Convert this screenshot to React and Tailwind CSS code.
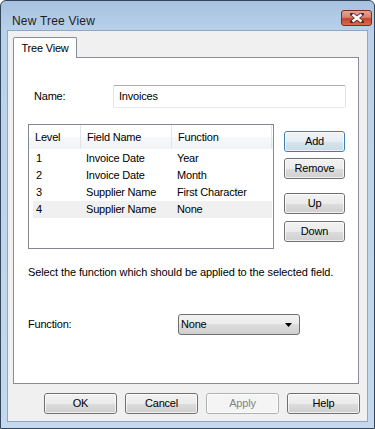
import React from 'react';

const ROWS = [
  { level: '1', field: 'Invoice Date', fn: 'Year' },
  { level: '2', field: 'Invoice Date', fn: 'Month' },
  { level: '3', field: 'Supplier Name', fn: 'First Character' },
  { level: '4', field: 'Supplier Name', fn: 'None', selected: true },
];

const font = { fontFamily: '"Liberation Sans", Arial, sans-serif' };

const WinButton = ({ children, className = '', isDefault, disabled }) => {
  const border = isDefault
    ? 'border-[#3c7fb1]'
    : disabled
    ? 'border-[#adb2b5]'
    : 'border-[#707070]';
  const bg = isDefault
    ? 'bg-[linear-gradient(#eef4f9_0%,#e6eef5_50%,#d8e4ee_50%,#cbdae6_100%)]'
    : disabled
    ? 'bg-[#f4f4f4]'
    : 'bg-[linear-gradient(#f2f2f2_0%,#ebebeb_50%,#dddddd_50%,#cfcfcf_100%)]';
  return (
    <div
      className={`flex items-center justify-center h-[21px] rounded-[3px] border ${border} ${bg} ${
        disabled ? 'text-[#838383]' : 'text-black'
      } text-[11px] tracking-[-0.2px] ${className}`}
    >
      <div className="flex items-center justify-center w-full h-full rounded-[2px] border border-white/70">
        {children}
      </div>
    </div>
  );
};

const App = () => {
  return (
    <div className="w-[375px] h-[429px] bg-white" style={font}>
      <div className="flex flex-col h-full rounded-t-[6px] border border-[#34475a] bg-[linear-gradient(#a7c2df_0px,#b9d1ea_30px,#c4d9ef_100%)]">
        {/* title bar */}
        <div className="flex items-start h-[29px] shrink-0 pl-[11px] pr-[2px]">
          <div className="mt-[13px] text-[12px] text-[#1e1e1e] tracking-[0.2px] leading-[14px]">
            New Tree View
          </div>
          <div className="ml-auto mt-[9px] w-[31px] h-[16px] rounded-[3px] border border-[#7a2d22] bg-[linear-gradient(#e8a493_0%,#d7826d_45%,#c7452f_55%,#d96a4f_100%)] flex items-center justify-center">
            <svg width="14" height="10" viewBox="0 0 14 10">
              <path d="M2 1 L12 9 M12 1 L2 9" stroke="#5a2a22" strokeWidth="4" strokeLinecap="square" />
              <path d="M2.5 1.5 L11.5 8.5 M11.5 1.5 L2.5 8.5" stroke="#ffffff" strokeWidth="2.4" />
            </svg>
          </div>
        </div>

        {/* client area */}
        <div className="flex-1 mx-[6px] mb-[6px] bg-[#f0f0f0] border border-[#8fa7c1] flex flex-col px-[5px] pt-[6px]">
          {/* tab header */}
          <div className="flex">
            <div className="relative z-10 w-[64px] h-[21px] -mb-px bg-white border border-b-0 border-[#898c95] rounded-t-[2px] flex items-center justify-center text-[11px] tracking-[-0.2px] text-black">
              Tree View
            </div>
          </div>

          {/* tab panel */}
          <div className="h-[327px] w-[346px] bg-white border border-[#898c95] flex flex-col text-[11px] tracking-[-0.2px] text-black">
            <div className="flex items-center mt-[27px] pl-[20px]">
              <div className="w-[79px]">Name:</div>
              <div className="w-[233px] h-[23px] border border-[#abadb3] border-x-[#e2e3ea] border-b-[#e3e9ef] rounded-[2px] flex items-center pl-[5px]">
                Invoices
              </div>
            </div>

            <div className="flex mt-[16px] pl-[14px]">
              <div className="w-[246px] h-[125px] border border-[#828790] bg-white">
                <div className="flex h-[24px] bg-[linear-gradient(#ffffff_0%,#ffffff_50%,#f7f8fa_50%,#f1f2f4_100%)]">
                  <div className="w-[52px] pl-[6px] flex items-center border-r border-[#e5e5e5]">Level</div>
                  <div className="w-[91px] pl-[6px] flex items-center border-r border-[#e5e5e5]">Field Name</div>
                  <div className="w-[100px] pl-[6px] flex items-center border-r border-[#e5e5e5]">Function</div>
                </div>
                <div className="pt-px pl-[4px] pr-px">
                  {ROWS.map((row) => (
                    <div
                      key={row.level}
                      className={`flex items-center h-[17px] ${row.selected ? 'bg-[#f0f0f0]' : ''}`}
                    >
                      <div className="w-[53px] pl-[3px]">{row.level}</div>
                      <div className="w-[91px]">{row.field}</div>
                      <div className="flex-1">{row.fn}</div>
                    </div>
                  ))}
                </div>
              </div>

              <div className="flex flex-col ml-[10px] mt-[7px] w-[61px]">
                <WinButton isDefault>Add</WinButton>
                <WinButton className="mt-[6px]">Remove</WinButton>
                <WinButton className="mt-[14px]">Up</WinButton>
                <WinButton className="mt-[7px]">Down</WinButton>
              </div>
            </div>

            <div className="mt-[17px] pl-[14px] leading-[13px] tracking-[-0.1px]">
              Select the function which should be applied to the selected field.
            </div>

            <div className="flex items-center mt-[35px] pl-[14px]">
              <div className="w-[150px]">Function:</div>
              <div className="w-[122px] h-[21px] rounded-[3px] border border-[#707070] bg-[linear-gradient(#f2f2f2_0%,#ebebeb_50%,#dddddd_50%,#cfcfcf_100%)] flex items-center pl-[2px] pr-[7px]">
                <span>None</span>
                <svg className="ml-auto" width="7" height="4" viewBox="0 0 7 4">
                  <path d="M0 0 H7 L3.5 4 Z" fill="#000" />
                </svg>
              </div>
            </div>
          </div>

          {/* dialog buttons */}
          <div className="flex justify-end gap-[8px] mt-[9px] pr-[2px]">
            <WinButton className="w-[73px]">OK</WinButton>
            <WinButton className="w-[73px]">Cancel</WinButton>
            <WinButton className="w-[73px]" disabled>Apply</WinButton>
            <WinButton className="w-[73px]">Help</WinButton>
          </div>
        </div>
      </div>
    </div>
  );
};

export default App;
